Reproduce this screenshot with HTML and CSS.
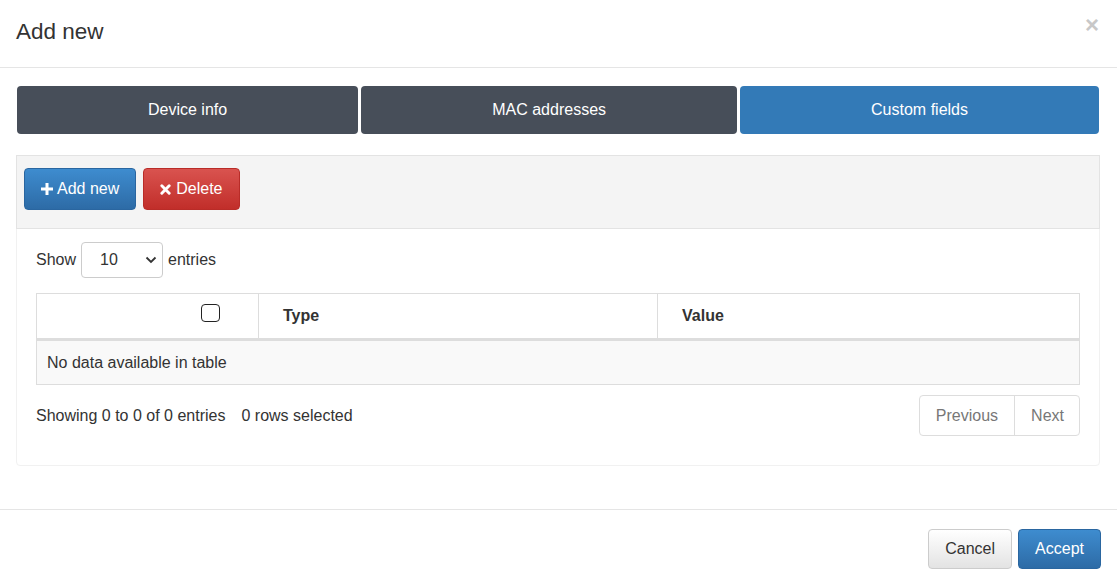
FILE: index.html
```html
<!DOCTYPE html>
<html>
<head>
<meta charset="utf-8">
<link rel="stylesheet" href="styles.css">
</head>
<body>
<div class="modal">
  <div class="modal-header">
    <h4 class="modal-title">Add new</h4>
    <span class="close">&times;</span>
  </div>
  <div class="modal-body">
    <div class="tabs">
      <div class="tab">Device info</div>
      <div class="tab">MAC addresses</div>
      <div class="tab active">Custom fields</div>
    </div>
    <div class="panel">
      <div class="toolbar">
        <button class="btn btn-primary"><svg class="ico" viewBox="0 0 12 12"><path d="M4.5 0h3v4.5H12v3H7.5V12h-3V7.5H0v-3h4.5z" fill="#fff"/></svg>Add new</button>
        <button class="btn btn-danger"><svg class="ico ico-x" viewBox="0 0 12 12"><path d="M2 2L10 10M10 2L2 10" stroke="#fff" stroke-width="3.2" stroke-linecap="round"/></svg>Delete</button>
      </div>
      <div class="panel-body">
        <div class="length">
          <span>Show</span>
          <div class="select"><span>10</span><svg viewBox="0 0 12 8" class="chev"><path d="M1.5 1.5L6 6L10.5 1.5" stroke="#333" stroke-width="1.8" fill="none"/></svg></div>
          <span>entries</span>
        </div>
        <table class="table">
          <thead>
            <tr>
              <th class="col-check"><span class="checkbox"></span></th>
              <th class="col-type">Type</th>
              <th>Value</th>
            </tr>
          </thead>
          <tbody>
            <tr><td colspan="3">No data available in table</td></tr>
          </tbody>
        </table>
        <div class="table-footer">
          <div class="info"><span>Showing 0 to 0 of 0 entries</span><span class="sel">0 rows selected</span></div>
          <div class="pagination">
            <span class="page">Previous</span>
            <span class="page">Next</span>
          </div>
        </div>
      </div>
    </div>
  </div>
  <div class="modal-footer">
    <button class="btn btn-default">Cancel</button>
    <button class="btn btn-primary btn-accept">Accept</button>
  </div>
</div>
</body>
</html>
```
FILE: styles.css
```css
* { box-sizing: border-box; }
html, body {
  margin: 0;
  padding: 0;
  background: #fff;
  font-family: "Liberation Sans", Arial, sans-serif;
  font-size: 16px;
  color: #333;
}
.modal { width: 1117px; }
.modal-header {
  position: relative;
  height: 68px;
  padding: 17px 16px 15px 16px;
  border-bottom: 1px solid #e5e5e5;
}
.modal-title {
  margin: 0;
  font-size: 22.5px;
  font-weight: normal;
  line-height: 30px;
  color: #333;
}
.close {
  position: absolute;
  right: 18px;
  top: 13px;
  font-size: 24px;
  font-weight: bold;
  color: #c8c8c8;
  line-height: 1;
}
.modal-body {
  padding: 18px 17px 43px 16px;
}
.tabs {
  display: flex;
  gap: 3px;
  margin: 0 1px 0 1px;
}
.tab {
  flex: 1 1 auto;
  height: 48px;
  line-height: 48px;
  text-align: center;
  background: #474e59;
  color: #fff;
  border-radius: 4px;
}
.tab.active { background: #337ab7; }
.panel {
  margin-top: 21px;
  border: 1px solid #f1f1f1;
  border-radius: 4px;
}
.toolbar {
  background: #f4f4f4;
  border: 1px solid #e3e3e3;
  margin: -1px -1px 0 -1px;
  padding: 12px 7px 18px 7px;
  display: flex;
  gap: 7px;
}
.btn {
  font-family: inherit;
  font-size: 16px;
  line-height: 20px;
  padding: 10px 16px;
  border-radius: 4px;
  border: 1px solid transparent;
  display: inline-flex;
  align-items: center;
  cursor: pointer;
}
.btn-primary {
  color: #fff;
  background: linear-gradient(to bottom, #3e8ccf 0%, #2d6ba6 100%);
  border-color: #2a66a0;
}
.btn-danger {
  color: #fff;
  background: linear-gradient(to bottom, #d9534f 0%, #c12e2a 100%);
  border-color: #b92c28;
}
.btn-default {
  color: #333;
  background: linear-gradient(to bottom, #fff 0%, #e3e3e3 100%);
  border-color: #ccc;
}
.ico { width: 12px; height: 12px; margin-right: 4px; }
.ico-x { width: 11px; height: 11px; margin-right: 5px; }
.panel-body {
  padding: 13px 19px 29px 19px;
}
.length {
  display: flex;
  align-items: center;
  gap: 5px;
}
.select {
  width: 82px;
  height: 36px;
  border: 1px solid #ccc;
  border-radius: 4px;
  display: flex;
  align-items: center;
  justify-content: space-between;
  padding: 0 5px 0 18px;
}
.chev { width: 12px; height: 8px; }
.table {
  width: 100%;
  margin-top: 15px;
  border-collapse: collapse;
  border: 1px solid #ddd;
}
.table th {
  height: 46px;
  text-align: left;
  font-weight: bold;
  padding: 0 24px;
  border-bottom: 3px solid #ddd;
  border-left: 1px solid #ddd;
}
.table th:first-child { border-left: none; }
.col-check { width: 222px; text-align: right !important; padding-right: 38px !important; }
.col-type { width: 399px; }
.checkbox {
  display: inline-block;
  width: 19px;
  height: 18px;
  border: 1.5px solid #222;
  border-radius: 4px;
  vertical-align: middle;
  position: relative;
  top: -3px;
}
.table td {
  height: 45px;
  background: #f9f9f9;
  padding: 0 10px;
}
.table-footer {
  display: flex;
  justify-content: space-between;
  align-items: center;
  margin-top: 10px;
}
.info .sel { margin-left: 16px; }
.pagination {
  display: flex;
  border: 1px solid #ddd;
  border-radius: 4px;
  height: 41px;
}
.page {
  line-height: 39px;
  padding: 0 16px 0 16px;
  color: #777;
}
.page + .page { border-left: 1px solid #ddd; padding: 0 15px 0 16px; }
.modal-footer {
  border-top: 1px solid #e5e5e5;
  padding: 19px 16px 15px 16px;
  display: flex;
  justify-content: flex-end;
  gap: 6px;
}
.modal-footer .btn { padding: 9px 16px; }
```
